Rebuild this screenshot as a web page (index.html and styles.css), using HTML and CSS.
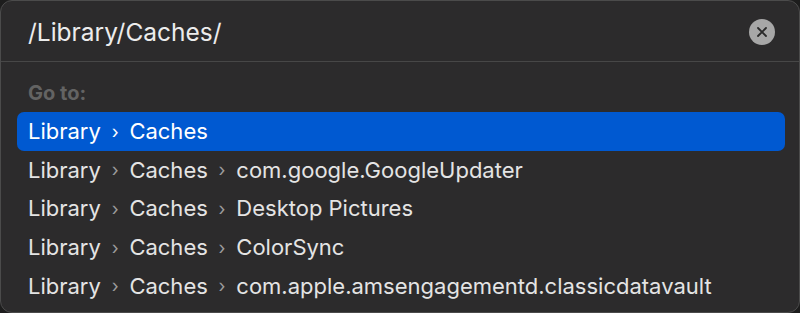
FILE: index.html
```html
<!DOCTYPE html>
<html>
<head>
    <title>Go to Folder</title>
    <link rel="stylesheet" href="styles.css">
</head>
<body>
    <div class="panel">
        <div class="search-bar">
            <span class="path-input">/Library/Caches/</span>
            <span class="clear-btn">
                <svg width="12" height="12" viewBox="0 0 12 12">
                    <path d="M2 2 L10 10 M10 2 L2 10" stroke="#2a2a2a" stroke-width="1.8" stroke-linecap="round"/>
                </svg>
            </span>
        </div>

        <div class="results">
            <div class="section-label">Go to:</div>
            <ul class="result-list">
                <li class="result-item selected">
                    <span>Library</span><span class="chev">›</span><span>Caches</span>
                </li>
                <li class="result-item">
                    <span>Library</span><span class="chev">›</span><span>Caches</span><span class="chev">›</span><span>com.google.GoogleUpdater</span>
                </li>
                <li class="result-item">
                    <span>Library</span><span class="chev">›</span><span>Caches</span><span class="chev">›</span><span>Desktop Pictures</span>
                </li>
                <li class="result-item">
                    <span>Library</span><span class="chev">›</span><span>Caches</span><span class="chev">›</span><span>ColorSync</span>
                </li>
                <li class="result-item">
                    <span>Library</span><span class="chev">›</span><span>Caches</span><span class="chev">›</span><span>com.apple.amsengagementd.classicdatavault</span>
                </li>
            </ul>
        </div>
    </div>
</body>
</html>
```

FILE: styles.css
```css
html, body {
    margin: 0;
    background-color: #1d1d1d;
}
body {
    font-family: Inter, "Noto Sans", sans-serif;
    color: #e6e6e6;
}
.panel {
    box-sizing: border-box;
    width: 800px;
    height: 313px;
    background: #2c2b2c;
    border: 1px solid #4b4b4b;
    border-radius: 12px;
    overflow: hidden;
}
.search-bar {
    height: 60px;
    display: flex;
    align-items: center;
    justify-content: space-between;
    padding: 0 24px 0 27px;
    border-bottom: 1px solid #474747;
}
.path-input {
    font-size: 24.5px;
    color: #ececec;
    padding-top: 1px;
}
.clear-btn {
    width: 26px;
    height: 26px;
    border-radius: 50%;
    background: #a7a7a7;
    display: flex;
    align-items: center;
    justify-content: center;
    margin-top: 1px;
}
.section-label {
    font-size: 20px;
    font-weight: 700;
    color: #636363;
    padding: 19px 0 0 27px;
    height: 31px;
}
.result-list {
    list-style: none;
    margin: 0;
    padding: 0 14px 0 16px;
}
.result-item {
    height: 38.6px;
    display: flex;
    align-items: center;
    padding-left: 11px;
    font-size: 22px;
    color: #e4e4e4;
    border-radius: 7px;
}
.result-item.selected {
    background: #0059d1;
    color: #ffffff;
}
.chev {
    color: #9c9c9c;
    font-size: 18px;
    width: 28.5px;
    text-align: center;
}
.result-item.selected .chev {
    color: #ffffff;
}
```
